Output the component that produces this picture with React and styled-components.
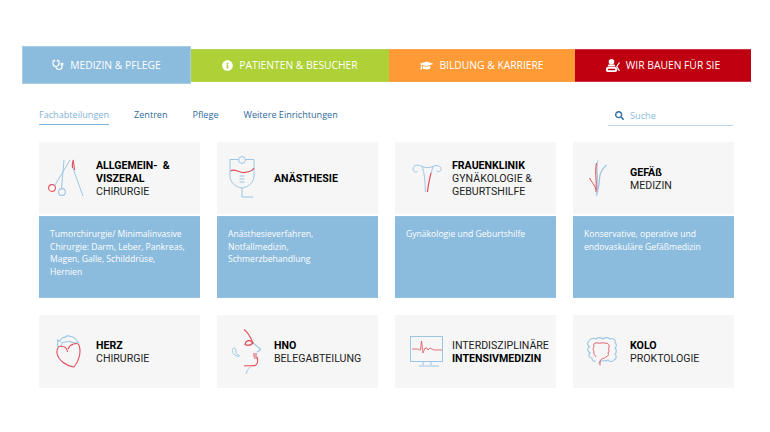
import React from "react";
import styled, { createGlobalStyle } from "styled-components";
import { Stethoscope } from "lucide-react";
import { FaInfoCircle, FaGraduationCap, FaSearch } from "react-icons/fa";

const RED = "#e0505e";
const BLUE = "#9cc6e4";

function ScissorsIcon() {
  return (
    <svg width="37" height="38" viewBox="0 0 37 38" fill="none">
      <circle cx="4" cy="29" r="3.4" stroke={RED} strokeWidth="1.1" />
      <circle cx="14" cy="33" r="3.4" stroke={BLUE} strokeWidth="1.1" />
      <path d="M6.5 27 L22 1" stroke={BLUE} strokeWidth="1" />
      <path d="M13.5 29.5 L16 1" stroke={BLUE} strokeWidth="1" />
      <path d="M24.5 8 L35 37" stroke={BLUE} strokeWidth="1" />
      <path d="M24.5 9 C24 6 24.5 3 25.2 1 L26.6 11" stroke={RED} strokeWidth="1.1" />
    </svg>
  );
}

function DripIcon() {
  return (
    <svg width="26" height="44" viewBox="0 0 26 44" fill="none">
      <circle cx="13" cy="4" r="3.4" stroke={BLUE} strokeWidth="1" />
      <path d="M9.5 3.5 H1 V20 C1 26 6 31 13 32 C20 31 25 26 25 20 V3.5 H16.5" stroke={BLUE} strokeWidth="1" />
      <path d="M1.5 15 C6 12 10 17 15 16.5 C19 16 23 16 25 12" stroke={RED} strokeWidth="1.2" />
      <path d="M10.5 20 H15.5 M10.5 23 H15.5 M10.5 26 H15.5" stroke={BLUE} strokeWidth="1" />
      <path d="M13 32 V41 H24" stroke={BLUE} strokeWidth="1" />
    </svg>
  );
}

function UterusIcon() {
  return (
    <svg width="30" height="29" viewBox="0 0 30 29" fill="none">
      <path d="M10 2.5 C6 0 1 1 1 5 C1 8 4.5 9 5.5 7" stroke={BLUE} strokeWidth="1" />
      <path d="M10 2.5 C14 4 17 4 21 2.5 C25 0.5 29.5 2 29 5.5 C28.5 8 25.5 8.5 24.5 6.5" stroke={BLUE} strokeWidth="1" />
      <path d="M10 2.5 C12.5 8 13 18 13.5 28" stroke={BLUE} strokeWidth="1" />
      <path d="M21 2.5 C20 6 19.5 8 19 10" stroke={BLUE} strokeWidth="1" />
      <path d="M19 9 C17.5 15 16 21 15.5 28" stroke={RED} strokeWidth="1.2" />
    </svg>
  );
}

function VesselIcon() {
  return (
    <svg width="18" height="36" viewBox="0 0 18 36" fill="none">
      <path d="M9 0.5 C6 9 11 20 7.5 35.5" stroke={BLUE} strokeWidth="1" />
      <path d="M17.5 5 C13 9 10.5 13 10.5 19 C10.5 26 8.5 31 7.5 35.5" stroke={BLUE} strokeWidth="1.2" />
      <path d="M7.5 3 C5.5 12 8 20 7 32" stroke={RED} strokeWidth="1.1" />
      <path d="M0.5 18 C2.5 22 6 25 7 30" stroke={RED} strokeWidth="1" />
    </svg>
  );
}

function HeartIcon() {
  return (
    <svg width="25" height="33" viewBox="0 0 25 33" fill="none">
      <path d="M2 12 L1.5 5 L4 6.5 C4 4 7 2 9 2.5 C10 0.5 13 0.5 14.5 1.5 C17 1 21 4 22 8 C19 8.5 18 7 16 7.5 C13 5 9 7 6 8 L5.5 11" stroke={BLUE} strokeWidth="1.1" />
      <path d="M12 14 C14 9 21 7 23 10 C25.5 17 23 26 18 32 C10 31 2 25 1 18 C0.5 13 3 10.5 6 11.5 C9 11.5 11 13 11.5 17" stroke={RED} strokeWidth="1.1" />
    </svg>
  );
}

function FaceIcon() {
  return (
    <svg width="30" height="45" viewBox="0 0 30 45" fill="none">
      <path d="M12 0.5 C17 4 19 9 21 14" stroke={RED} strokeWidth="1.1" />
      <path d="M21 14 L28.5 20 C28 22 26 22 25 23" stroke={BLUE} strokeWidth="1.1" />
      <path d="M14 13 C17 10 19 12 21 14 C18 17 16 17 13 15.5 Z" stroke={RED} strokeWidth="1.3" />
      <path d="M25 28 C26 31 26 34 24 36 C21 38 16 36 12 37" stroke={RED} strokeWidth="1.1" />
      <path d="M21 25 H25 M21 27 H25 M22 29 H25" stroke={RED} strokeWidth="1" />
      <path d="M18 38 C16 40 15 42 14 45" stroke={BLUE} strokeWidth="1" />
      <path d="M2 19 C-1 20 0 24 3 26 C6 28 8 28 7 26 C4 26 4 23 4 22 C4 20 3 19 2 19 Z" stroke={BLUE} strokeWidth="1" />
    </svg>
  );
}

function MonitorIcon() {
  return (
    <svg width="33" height="31" viewBox="0 0 33 31" fill="none">
      <rect x="0.5" y="0.5" width="32" height="25" stroke={BLUE} strokeWidth="1" />
      <path d="M2 13 H8 L9.5 14 L10.5 14 L11.5 5 L13 17 L15 12 L17 12 L18 14 L20 12 L24 14 H32" stroke={RED} strokeWidth="0.8" />
      <path d="M13 26 V29 M21 26 V29 M9 30 H29" stroke={BLUE} strokeWidth="1" />
    </svg>
  );
}

function ColonIcon() {
  return (
    <svg width="30" height="29" viewBox="0 0 30 29" fill="none">
      <path d="M9 24 C6 25 5 23 5 21 C2 21 1 18 3 16 C0 14 0 11 2.500 10 C0 8 0 5 2 4 C3 1 7 1 9 2 C11 0.500 14 0.500 16 2 C18 0.500 21 0.500 23 2 C26 0.500 29 3 28 5.500 C30 7 29.500 10 28 11 C30 13 29.500 16 28 17 C30 19 29.500 22 27 23 C26 25 22 25 21 23 C19 25 16 23 15 24 C13 24 12 25 12 27" stroke={BLUE} strokeWidth="1.1" />
      <path d="M13 28.500 V24 C14 21 17 22 19 20 C21 19 22 18 21 16 C23 14 21 12 22 10 C23 8 21 7 20 6 C18 7 16 5 14 6 C12 7 10 5 8 6 C6 7 7 9 7 10 C5 12 7 14 7 15 C6 17 8 18 9 20" stroke={RED} strokeWidth="0.9" />
    </svg>
  );
}

function DiggerIcon() {
  return (
    <svg width="14" height="13" viewBox="0 0 14 13" fill="white">
      <circle cx="5.500" cy="2.800" r="2.800" />
      <path d="M2.500 5.500 H8.500 L9.500 7.500 H1.500 Z" />
      <path d="M2.200 8 H8.800 A2.500 2.500 0 0 1 8.800 13 H2.200 A2.500 2.500 0 0 1 2.200 8 Z M2.500 9.700 A.8.8 0 0 0 2.500 11.300 H8.500 A.8.8 0 0 0 8.500 9.700 Z" fillRule="evenodd" />
      <path d="M13.500 3.500 L10.800 7.500 L13.500 12" stroke="white" strokeWidth="1.200" fill="none" />
    </svg>
  );
}

const tabs = [
  { label: "MEDIZIN & PFLEGE", bg: "#8bbbdd", edge: "#a9cde6", active: true, icon: <Stethoscope size={12} strokeWidth={2.4} /> },
  { label: "PATIENTEN & BESUCHER", bg: "#add136", edge: "#b5d44c", icon: <FaInfoCircle size={11} /> },
  { label: "BILDUNG & KARRIERE", bg: "#ff9b37", edge: "#fda24a", icon: <FaGraduationCap size={13} /> },
  { label: "WIR BAUEN FÜR SIE", bg: "#bf0010", edge: "#cc3340", icon: <DiggerIcon /> },
];

const links = ["Fachabteilungen", "Zentren", "Pflege", "Weitere Einrichtungen"];

const topCards = [
  {
    icon: <ScissorsIcon />,
    left: 9,
    title: [["ALLGEMEIN-  &", true], ["VISZERAL", true], ["CHIRURGIE", false]],
    text: "Tumorchirurgie/ Minimalinvasive Chirurgie: Darm, Leber, Pankreas, Magen, Galle, Schilddrüse, Hernien",
  },
  {
    icon: <DripIcon />,
    left: 12,
    title: [["ANÄSTHESIE", true]],
    text: "Anästhesieverfahren, Notfallmedizin, Schmerzbehandlung",
  },
  {
    icon: <UterusIcon />,
    left: 17,
    title: [["FRAUENKLINIK", true], ["GYNÄKOLOGIE &", false], ["GEBURTSHILFE", false]],
    text: "Gynäkologie und Geburtshilfe",
  },
  {
    icon: <VesselIcon />,
    left: 16,
    title: [["GEFÄß", true], ["MEDIZIN", false]],
    text: "Konservative, operative und endovaskuläre Gefäßmedizin",
  },
];

const bottomCards = [
  { icon: <HeartIcon />, left: 17, title: [["HERZ", true], ["CHIRURGIE", false]] },
  { icon: <FaceIcon />, left: 15, title: [["HNO", true], ["BELEGABTEILUNG", false]] },
  { icon: <MonitorIcon />, left: 15, title: [["INTERDISZIPLINÄRE", false], ["INTENSIVMEDIZIN", true]] },
  { icon: <ColonIcon />, left: 14, title: [["KOLO", true], ["PROKTOLOGIE", false]] },
];

function CardHead({ card, tall }) {
  return (
    <Head $tall={tall}>
      <IconSlot $left={card.left}>{card.icon}</IconSlot>
      <Title>
        {card.title.map(([line, bold]) => (
          <TitleLine key={line} $bold={bold}>{line}</TitleLine>
        ))}
      </Title>
    </Head>
  );
}

export default function App() {
  return (
    <>
      <GlobalStyle />
      <Page>
        <TabBar>
          {tabs.map((tab) => (
            <Tab key={tab.label} $bg={tab.bg} $edge={tab.edge} $active={tab.active}>
              {tab.icon}
              <span>{tab.label}</span>
            </Tab>
          ))}
        </TabBar>
        <SubNav>
          <Links>
            {links.map((link, i) => (
              <NavLink key={link} $active={i === 0}>{link}</NavLink>
            ))}
          </Links>
          <Search>
            <FaSearch size={9} color="#2f6fa5" />
            <span>Suche</span>
          </Search>
        </SubNav>
        <Grid>
          {topCards.map((card) => (
            <Card key={card.text}>
              <CardHead card={card} />
              <Body>{card.text}</Body>
            </Card>
          ))}
        </Grid>
        <BottomGrid>
          {bottomCards.map((card) => (
            <Card key={card.title[0][0]}>
              <CardHead card={card} tall />
            </Card>
          ))}
        </BottomGrid>
      </Page>
    </>
  );
}

const GlobalStyle = createGlobalStyle`
  html, body {
    margin: 0;
    padding: 0;
    background: #fff;
  }
`;
const Page = styled.div`
  width: 770px;
  height: 432px;
  box-sizing: border-box;
  padding-top: 46px;
  overflow: hidden;
  font-family: "Open Sans", sans-serif;
`;
const TabBar = styled.div`
  display: grid;
  grid-template-columns: 169px 198px 186px 176px;
  align-items: center;
  margin-left: 22px;
  height: 38px;
`;
const Tab = styled.div`
  height: ${(p) => (p.$active ? "38px" : "33px")};
  box-sizing: border-box;
  display: flex;
  align-items: center;
  justify-content: center;
  gap: 5px;
  background: ${(p) => p.$bg};
  border: 1px solid ${(p) => p.$edge};
  border-left: ${(p) => (p.$active ? undefined : "none")};
  border-right: ${(p) => (p.$active ? undefined : "none")};
  color: #fff;
  font-size: 10.3px;
  span {
    margin-left: 1px;
  }
  svg {
    flex-shrink: 0;
  }
`;
const SubNav = styled.div`
  display: flex;
  justify-content: space-between;
  align-items: flex-end;
  margin: 21px 37px 0 39px;
  height: 21px;
`;
const Links = styled.div`
  display: flex;
  gap: 25px;
  margin-bottom: 1px;
`;
const NavLink = styled.div`
  height: 19px;
  box-sizing: border-box;
  padding-top: 2px;
  font-size: 9.1px;
  line-height: 13px;
  color: ${(p) => (p.$active ? "#7fb1d6" : "#2d6a9c")};
  border-bottom: ${(p) => (p.$active ? "1.5px solid #7fb1d6" : "none")};
`;
const Search = styled.div`
  width: 125px;
  height: 20px;
  box-sizing: border-box;
  display: flex;
  align-items: center;
  gap: 6px;
  padding-left: 7px;
  border-bottom: 1px solid #b9d6ea;
  color: #8bbbdd;
  font-size: 9.2px;
`;
const Grid = styled.div`
  display: grid;
  grid-template-columns: repeat(4, 161px);
  column-gap: 17px;
  margin: 16px 0 0 39px;
`;
const BottomGrid = styled(Grid)`
  margin-top: 17px;
`;
const Card = styled.div`
  display: flex;
  flex-direction: column;
`;
const Head = styled.div`
  height: ${(p) => (p.$tall ? "73px" : "72px")};
  display: flex;
  align-items: center;
  background: #f6f6f6;
`;
const IconSlot = styled.div`
  width: 57px;
  box-sizing: border-box;
  padding-left: ${(p) => p.$left}px;
  flex-shrink: 0;
  svg {
    display: block;
  }
`;
const Title = styled.div`
  display: flex;
  flex-direction: column;
  padding-top: 1px;
  font-family: Roboto, sans-serif;
  font-size: 10.6px;
  line-height: 13px;
  white-space: pre;
`;
const TitleLine = styled.span`
  font-weight: ${(p) => (p.$bold ? 700 : 400)};
  color: ${(p) => (p.$bold ? "#000" : "#222")};
`;
const Body = styled.div`
  height: 82px;
  box-sizing: border-box;
  margin-top: 2px;
  padding: 11px 14px 0 11px;
  background: #8bbbdd;
  border-top: 1px solid #93c0e0;
  border-bottom: 1px solid #93c0e0;
  color: #fff;
  font-size: 8.6px;
  line-height: 12.5px;
`;
